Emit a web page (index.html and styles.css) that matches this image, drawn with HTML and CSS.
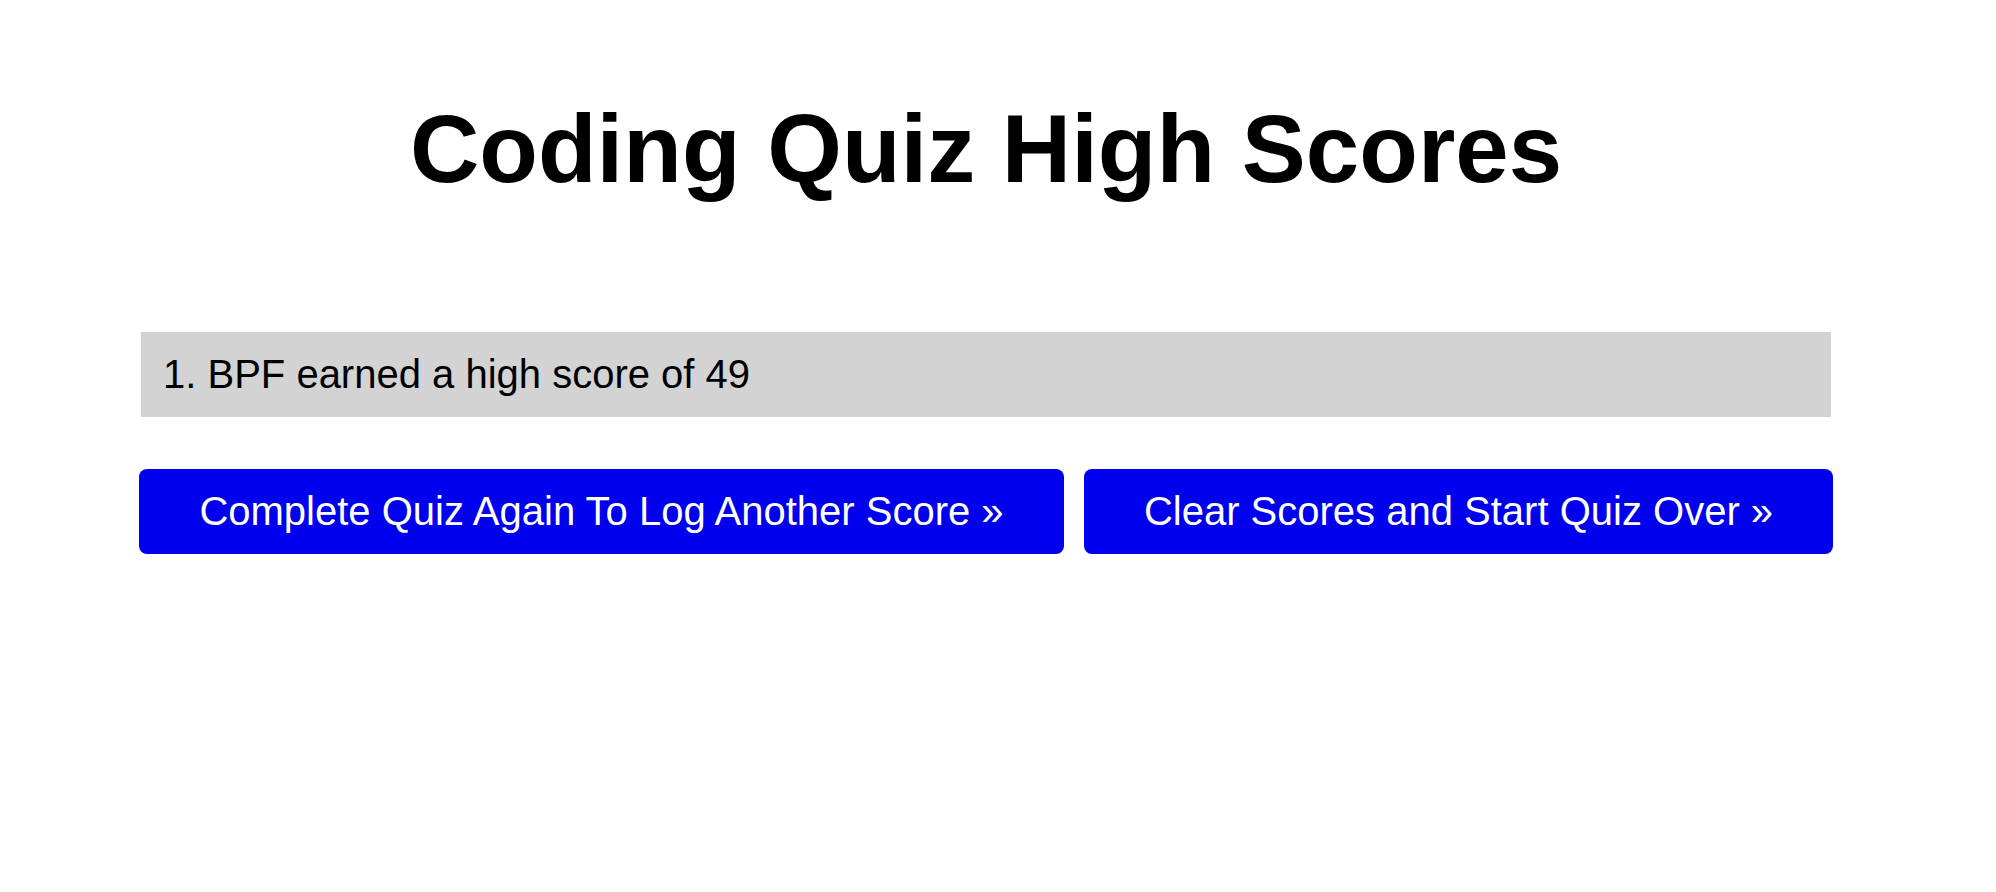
FILE: index.html
```html
<!DOCTYPE html>
<html lang="en">
<head>
<meta charset="utf-8">
<title>Coding Quiz High Scores</title>
<link rel="stylesheet" href="styles.css">
</head>
<body>
<main class="container">
  <h1 class="title">Coding Quiz High Scores</h1>
  <ol class="scores">
    <li class="score">1. BPF earned a high score of 49</li>
  </ol>
  <div class="actions">
    <a class="btn" href="#">Complete Quiz Again To Log Another Score »</a>
    <a class="btn" href="#">Clear Scores and Start Quiz Over »</a>
  </div>
</main>
</body>
</html>
```
FILE: styles.css
```css
html, body {
  margin: 0;
  padding: 0;
  background: #ffffff;
}

body {
  font-family: "Liberation Sans", Arial, sans-serif;
  color: #000000;
}

.container {
  width: 1694px;
  margin-left: 139px;
  padding-top: 94px;
}

.title {
  margin: 0;
  font-size: 96px;
  line-height: 110px;
  font-weight: bold;
  text-align: center;
}

.scores {
  list-style: none;
  margin: 128px 2px 0;
  padding: 0;
}

.score {
  background: #d3d3d3;
  font-size: 40px;
  line-height: 46px;
  padding: 19px 17px 20px 22px;
}

.actions {
  display: grid;
  grid-template-columns: 925fr 749fr;
  column-gap: 20px;
  margin-top: 52px;
}

.btn {
  display: block;
  background: #0000ee;
  color: #ffffff;
  text-decoration: none;
  text-align: center;
  font-size: 40px;
  line-height: 46px;
  padding: 19px 0 20px;
  border-radius: 8px;
  white-space: nowrap;
}
```
